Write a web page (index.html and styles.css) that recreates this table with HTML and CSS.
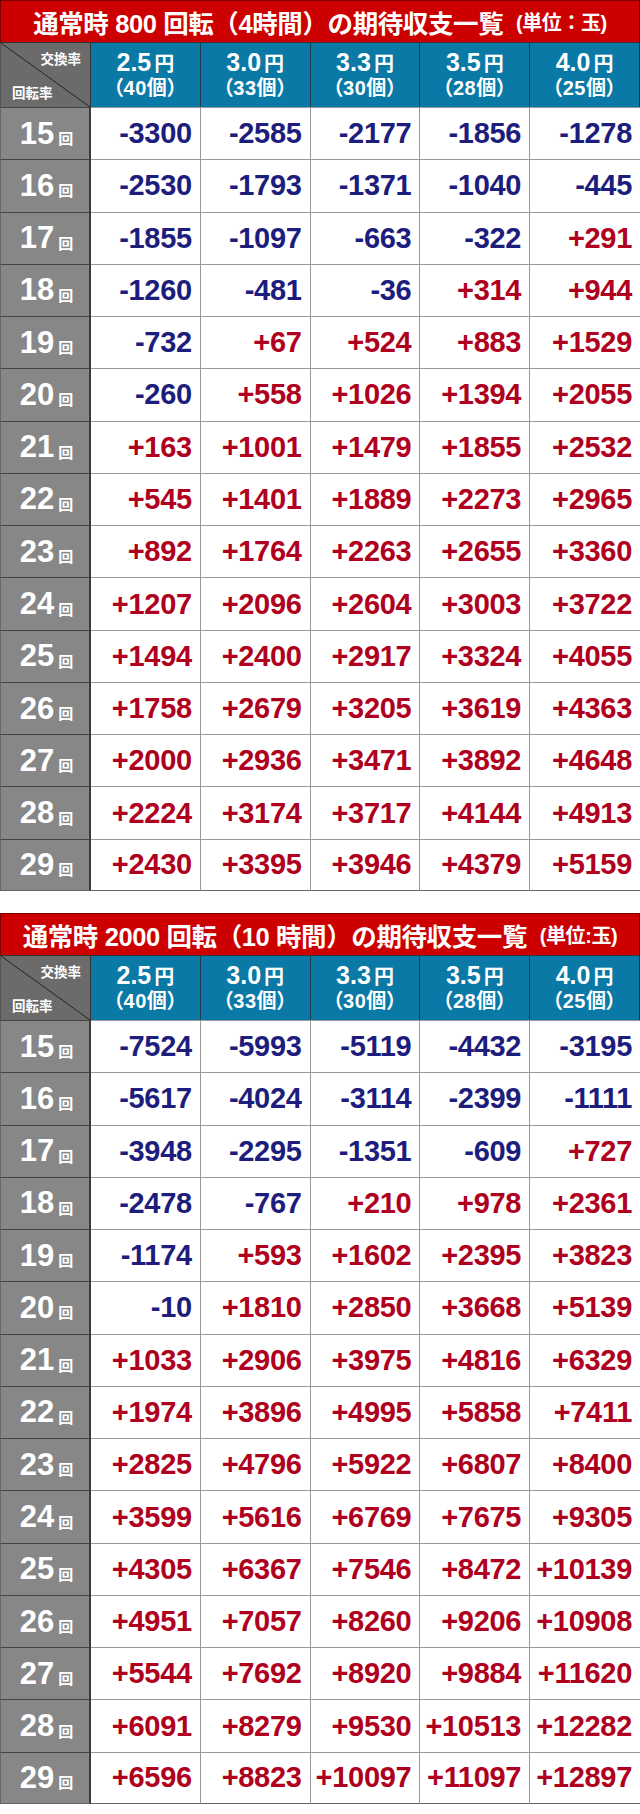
FILE: index.html
```html
<!DOCTYPE html>
<html lang="ja">
<head>
<meta charset="utf-8">
<title>期待収支一覧</title>
<link rel="stylesheet" href="styles.css">
</head>
<body>
<section class="chart">
  <h2 class="title">通常時 800 回転（4時間）の期待収支一覧 <small>(単位：玉)</small></h2>
  <div class="grid">
    <div class="corner"><span class="tr">交換率</span><span class="bl">回転率</span></div>
    <div class="rate"><div class="yen">2.5<small>円</small></div><div class="count">（40個）</div></div>
    <div class="rate"><div class="yen">3.0<small>円</small></div><div class="count">（33個）</div></div>
    <div class="rate"><div class="yen">3.3<small>円</small></div><div class="count">（30個）</div></div>
    <div class="rate"><div class="yen">3.5<small>円</small></div><div class="count">（28個）</div></div>
    <div class="rate"><div class="yen">4.0<small>円</small></div><div class="count">（25個）</div></div>

    <div class="lbl">15<small>回</small></div><div class="num neg">-3300</div><div class="num neg">-2585</div><div class="num neg">-2177</div><div class="num neg">-1856</div><div class="num neg">-1278</div>
    <div class="lbl">16<small>回</small></div><div class="num neg">-2530</div><div class="num neg">-1793</div><div class="num neg">-1371</div><div class="num neg">-1040</div><div class="num neg">-445</div>
    <div class="lbl">17<small>回</small></div><div class="num neg">-1855</div><div class="num neg">-1097</div><div class="num neg">-663</div><div class="num neg">-322</div><div class="num pos">+291</div>
    <div class="lbl">18<small>回</small></div><div class="num neg">-1260</div><div class="num neg">-481</div><div class="num neg">-36</div><div class="num pos">+314</div><div class="num pos">+944</div>
    <div class="lbl">19<small>回</small></div><div class="num neg">-732</div><div class="num pos">+67</div><div class="num pos">+524</div><div class="num pos">+883</div><div class="num pos">+1529</div>
    <div class="lbl">20<small>回</small></div><div class="num neg">-260</div><div class="num pos">+558</div><div class="num pos">+1026</div><div class="num pos">+1394</div><div class="num pos">+2055</div>
    <div class="lbl">21<small>回</small></div><div class="num pos">+163</div><div class="num pos">+1001</div><div class="num pos">+1479</div><div class="num pos">+1855</div><div class="num pos">+2532</div>
    <div class="lbl">22<small>回</small></div><div class="num pos">+545</div><div class="num pos">+1401</div><div class="num pos">+1889</div><div class="num pos">+2273</div><div class="num pos">+2965</div>
    <div class="lbl">23<small>回</small></div><div class="num pos">+892</div><div class="num pos">+1764</div><div class="num pos">+2263</div><div class="num pos">+2655</div><div class="num pos">+3360</div>
    <div class="lbl">24<small>回</small></div><div class="num pos">+1207</div><div class="num pos">+2096</div><div class="num pos">+2604</div><div class="num pos">+3003</div><div class="num pos">+3722</div>
    <div class="lbl">25<small>回</small></div><div class="num pos">+1494</div><div class="num pos">+2400</div><div class="num pos">+2917</div><div class="num pos">+3324</div><div class="num pos">+4055</div>
    <div class="lbl">26<small>回</small></div><div class="num pos">+1758</div><div class="num pos">+2679</div><div class="num pos">+3205</div><div class="num pos">+3619</div><div class="num pos">+4363</div>
    <div class="lbl">27<small>回</small></div><div class="num pos">+2000</div><div class="num pos">+2936</div><div class="num pos">+3471</div><div class="num pos">+3892</div><div class="num pos">+4648</div>
    <div class="lbl">28<small>回</small></div><div class="num pos">+2224</div><div class="num pos">+3174</div><div class="num pos">+3717</div><div class="num pos">+4144</div><div class="num pos">+4913</div>
    <div class="lbl">29<small>回</small></div><div class="num pos">+2430</div><div class="num pos">+3395</div><div class="num pos">+3946</div><div class="num pos">+4379</div><div class="num pos">+5159</div>
  </div>
</section>

<section class="chart">
  <h2 class="title">通常時 2000 回転（10 時間）の期待収支一覧 <small>(単位:玉)</small></h2>
  <div class="grid">
    <div class="corner"><span class="tr">交換率</span><span class="bl">回転率</span></div>
    <div class="rate"><div class="yen">2.5<small>円</small></div><div class="count">（40個）</div></div>
    <div class="rate"><div class="yen">3.0<small>円</small></div><div class="count">（33個）</div></div>
    <div class="rate"><div class="yen">3.3<small>円</small></div><div class="count">（30個）</div></div>
    <div class="rate"><div class="yen">3.5<small>円</small></div><div class="count">（28個）</div></div>
    <div class="rate"><div class="yen">4.0<small>円</small></div><div class="count">（25個）</div></div>

    <div class="lbl">15<small>回</small></div><div class="num neg">-7524</div><div class="num neg">-5993</div><div class="num neg">-5119</div><div class="num neg">-4432</div><div class="num neg">-3195</div>
    <div class="lbl">16<small>回</small></div><div class="num neg">-5617</div><div class="num neg">-4024</div><div class="num neg">-3114</div><div class="num neg">-2399</div><div class="num neg">-1111</div>
    <div class="lbl">17<small>回</small></div><div class="num neg">-3948</div><div class="num neg">-2295</div><div class="num neg">-1351</div><div class="num neg">-609</div><div class="num pos">+727</div>
    <div class="lbl">18<small>回</small></div><div class="num neg">-2478</div><div class="num neg">-767</div><div class="num pos">+210</div><div class="num pos">+978</div><div class="num pos">+2361</div>
    <div class="lbl">19<small>回</small></div><div class="num neg">-1174</div><div class="num pos">+593</div><div class="num pos">+1602</div><div class="num pos">+2395</div><div class="num pos">+3823</div>
    <div class="lbl">20<small>回</small></div><div class="num neg">-10</div><div class="num pos">+1810</div><div class="num pos">+2850</div><div class="num pos">+3668</div><div class="num pos">+5139</div>
    <div class="lbl">21<small>回</small></div><div class="num pos">+1033</div><div class="num pos">+2906</div><div class="num pos">+3975</div><div class="num pos">+4816</div><div class="num pos">+6329</div>
    <div class="lbl">22<small>回</small></div><div class="num pos">+1974</div><div class="num pos">+3896</div><div class="num pos">+4995</div><div class="num pos">+5858</div><div class="num pos">+7411</div>
    <div class="lbl">23<small>回</small></div><div class="num pos">+2825</div><div class="num pos">+4796</div><div class="num pos">+5922</div><div class="num pos">+6807</div><div class="num pos">+8400</div>
    <div class="lbl">24<small>回</small></div><div class="num pos">+3599</div><div class="num pos">+5616</div><div class="num pos">+6769</div><div class="num pos">+7675</div><div class="num pos">+9305</div>
    <div class="lbl">25<small>回</small></div><div class="num pos">+4305</div><div class="num pos">+6367</div><div class="num pos">+7546</div><div class="num pos">+8472</div><div class="num pos">+10139</div>
    <div class="lbl">26<small>回</small></div><div class="num pos">+4951</div><div class="num pos">+7057</div><div class="num pos">+8260</div><div class="num pos">+9206</div><div class="num pos">+10908</div>
    <div class="lbl">27<small>回</small></div><div class="num pos">+5544</div><div class="num pos">+7692</div><div class="num pos">+8920</div><div class="num pos">+9884</div><div class="num pos">+11620</div>
    <div class="lbl">28<small>回</small></div><div class="num pos">+6091</div><div class="num pos">+8279</div><div class="num pos">+9530</div><div class="num pos">+10513</div><div class="num pos">+12282</div>
    <div class="lbl">29<small>回</small></div><div class="num pos">+6596</div><div class="num pos">+8823</div><div class="num pos">+10097</div><div class="num pos">+11097</div><div class="num pos">+12897</div>
  </div>
</section>
</body>
</html>
```

FILE: styles.css
```css
* { box-sizing: border-box; }
html, body { margin: 0; padding: 0; background: #fff; }
body {
  width: 640px;
  font-family: "Liberation Sans", "Noto Sans CJK JP", sans-serif;
  font-weight: bold;
}
.chart { display: flex; flex-direction: column; }
.chart + .chart { margin-top: 22px; }

.title {
  margin: 0;
  height: 43px;
  background: #cc0000;
  border: 1px solid #7a0000;
  border-bottom-color: #333;
  color: #fff;
  font-size: 25.5px;
  font-weight: bold;
  display: flex;
  align-items: center;
  justify-content: center;
  white-space: pre;
  letter-spacing: -0.4px;
}
.title small { font-size: 20px; margin-left: 6px; }

.grid {
  display: grid;
  grid-template-columns: 91px repeat(5, 1fr);
  grid-template-rows: 64px;
  grid-auto-rows: 52.27px;
}

.corner {
  background: #6b6b6b linear-gradient(to top right, transparent calc(50% - 0.8px), #222 50%, transparent calc(50% + 0.8px));
  border-right: 1px solid #333;
  border-left: 1px solid #555;
  display: flex;
  flex-direction: column;
  justify-content: space-between;
  padding: 5px 9px 5px 11px;
  color: #fff;
  font-size: 13.5px;
}
.corner .tr { align-self: flex-end; }
.corner .bl { align-self: flex-start; }

.rate {
  background: #0b79a6;
  border-right: 1px solid #1f3a4a;
  color: #fff;
  display: flex;
  flex-direction: column;
  align-items: center;
  justify-content: center;
  padding-bottom: 2px;
}
.rate:last-of-type { border-right: none; }
.yen { font-size: 25px; line-height: 26px; }
.yen small { font-size: 20px; margin-left: 3px; }
.count {
  font-size: 20px;
  line-height: 22px;
  font-feature-settings: "palt";
  letter-spacing: 0.5px;
}

.lbl {
  background: #878787;
  border-top: 1px solid #444;
  border-right: 2px solid #3a3a3a;
  border-left: 1px solid #666;
  color: #fff;
  font-size: 31px;
  display: flex;
  align-items: center;
  justify-content: center;
  padding-left: 3px;
}
.lbl small {
  font-size: 15px;
  margin-left: 4px;
  margin-top: 8px;
}

.num {
  border-top: 1px solid #999;
  border-right: 1px solid #999;
  display: flex;
  align-items: center;
  justify-content: flex-end;
  padding-right: 8px;
  font-size: 29px;
  letter-spacing: -0.3px;
}
.num:nth-child(6n) { border-right: none; }
.grid > div:nth-last-child(-n+6) { border-bottom: 1px solid #666; }
.neg { color: #1d1d7d; }
.pos { color: #b00020; }
```
